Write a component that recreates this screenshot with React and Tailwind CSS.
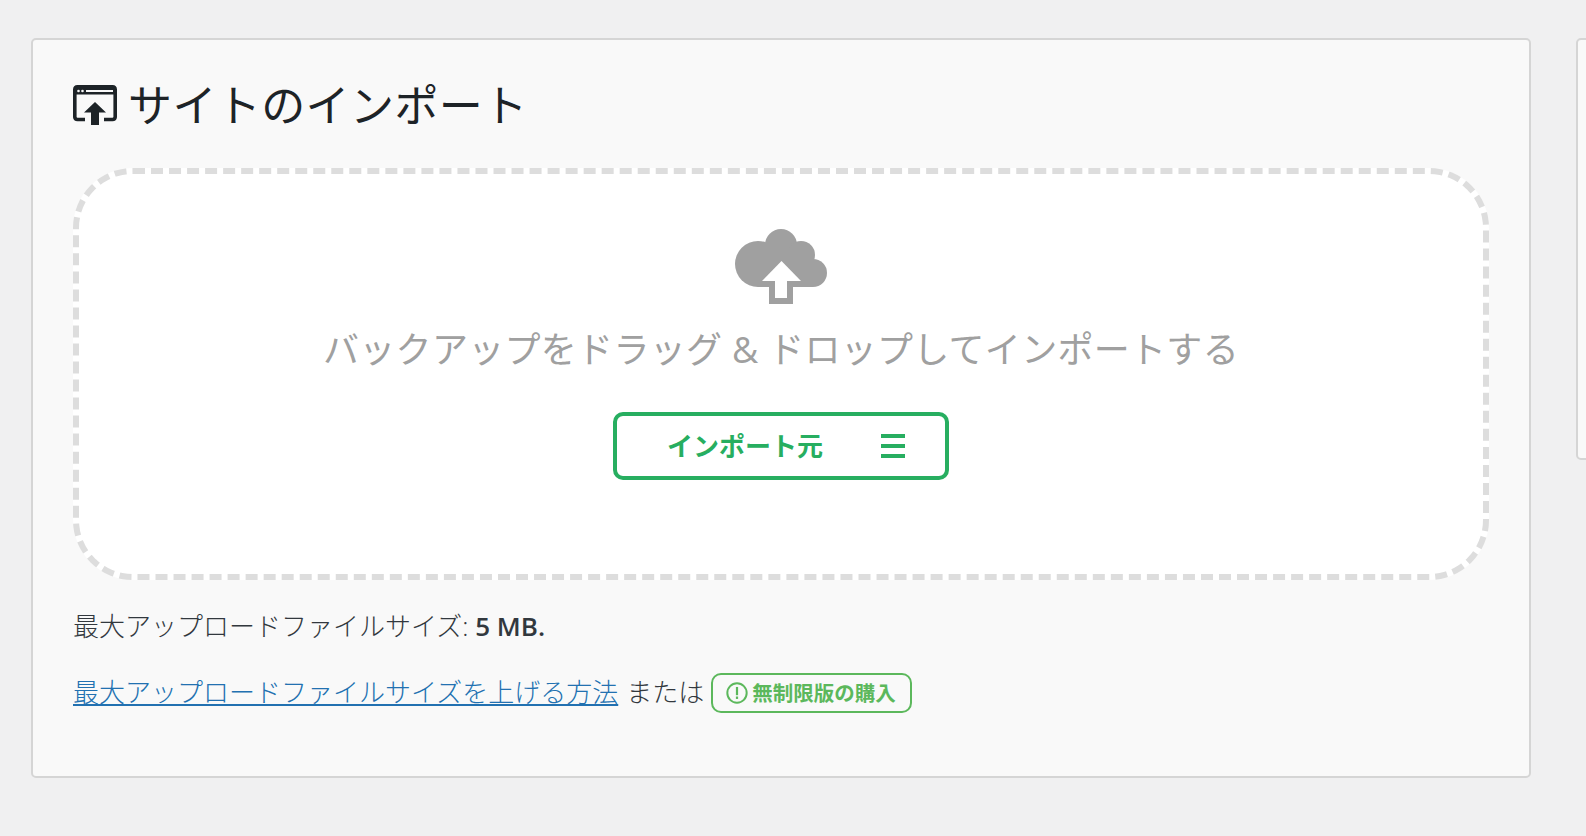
import React from "react";

const jp = "font-['Open_Sans','Noto_Sans_CJK_JP',sans-serif]";

function ImportIcon() {
  return (
    <svg width="44" height="42" viewBox="0 0 44 42" className="shrink-0 mt-[1px]">
      <path d="M12 34.500H4.500A2.800 2.800 0 0 1 1.800 32V4.500A2.800 2.800 0 0 1 4.500 1.800h35A2.800 2.800 0 0 1 42.200 4.500V32a2.800 2.800 0 0 1-2.700 2.500H31" fill="none" stroke="#1d2327" strokeWidth="3.600" />
      <rect x="2" y="2" width="40" height="7.500" fill="#1d2327" />
      <circle cx="5.500" cy="6" r="1.300" fill="#f9f9f9" />
      <circle cx="9.500" cy="6" r="1.300" fill="#f9f9f9" />
      <rect x="13" y="5" width="27" height="2" fill="#f9f9f9" />
      <path d="M22 17L11 27.500H18V40H26V27.500H33Z" fill="#1d2327" />
    </svg>
  );
}

function CloudIcon() {
  return (
    <svg width="92" height="76" viewBox="0 0 92 76" className="block">
      <circle cx="23" cy="35" r="23" fill="#a0a0a0" />
      <circle cx="46" cy="16" r="16" fill="#a0a0a0" />
      <circle cx="66" cy="26" r="14" fill="#a0a0a0" />
      <circle cx="78" cy="44" r="14" fill="#a0a0a0" />
      <rect x="23" y="20" width="55" height="38" fill="#a0a0a0" />
      <rect x="34" y="52" width="24" height="23" fill="#a0a0a0" />
      <path d="M46.500 32L27 52H66Z" fill="#ffffff" />
      <rect x="40" y="52" width="12" height="17" fill="#ffffff" />
    </svg>
  );
}

export default function App() {
  return (
    <div className={`${jp} w-[1586px] h-[836px] overflow-hidden bg-[#f0f0f1] pl-[31px] pt-[38px] flex items-start gap-[45px]`}>
      <section className="w-[1500px] h-[740px] shrink-0 bg-[#f9f9f9] border-2 border-[#d5d5d5] rounded-[5px] pl-[40px] pr-[41px] pt-[29px]">
        <h1 className="flex items-center gap-[11px] h-[72px] text-[44px] leading-[72px] font-normal tracking-[0.4px] text-[#1d2327]">
          <ImportIcon />
          <span>サイトのインポート</span>
        </h1>
        <div className="mt-[27px] h-[412px] w-[1416px] bg-white border-[6px] border-dashed border-[#dddddd] rounded-[60px] flex flex-col items-center pt-[55px]">
          <CloudIcon />
          <p className="mt-[18px] text-[36px] leading-[54px] font-normal tracking-[0.3px] text-[#a0a0a0] whitespace-nowrap">
            バックアップをドラッグ &amp; ドロップしてインポートする
          </p>
          <button className="mt-[35px] w-[336px] h-[68px] border-4 border-[#27ae60] rounded-[10px] bg-white flex items-center text-[#27ae60] font-bold text-[26px] pl-[50px]">
            <span>インポート元</span>
            <span className="ml-[58px] flex flex-col gap-[6px]">
              <span className="block w-[24px] h-[4px] bg-[#27ae60]" />
              <span className="block w-[24px] h-[4px] bg-[#27ae60]" />
              <span className="block w-[24px] h-[4px] bg-[#27ae60]" />
            </span>
          </button>
        </div>
        <p className="mt-[26px] text-[26px] leading-[40px] font-light text-[#32383e] whitespace-nowrap">
          最大アップロードファイルサイズ: <strong className="font-semibold">5 MB.</strong>
        </p>
        <p className="mt-[25px] text-[26px] leading-[40px] font-light text-[#32383e] flex items-center whitespace-nowrap">
          <a className="text-[#2271b1] underline">最大アップロードファイルサイズを上げる方法</a>
          <span className="ml-[8px]">または</span>
          <span className="ml-[7px] mt-[2px] h-[40px] w-[201px] border-2 border-[#5cb85c] rounded-[10px] flex items-center pl-[13px] text-[#5cb85c] text-[20.500px] font-bold">
            <svg width="22" height="22" viewBox="0 0 20 20" className="mr-[4px] shrink-0">
              <circle cx="10" cy="10" r="8.800" fill="none" stroke="#5cb85c" strokeWidth="1.800" />
              <rect x="9" y="4.500" width="2" height="7.500" fill="#5cb85c" />
              <rect x="9" y="13.200" width="2" height="2.200" fill="#5cb85c" />
            </svg>
            無制限版の購入
          </span>
        </p>
      </section>
      <aside className="w-[200px] h-[422px] shrink-0 bg-[#f9f9f9] border-2 border-[#d5d5d5] rounded-[5px]" />
    </div>
  );
}
